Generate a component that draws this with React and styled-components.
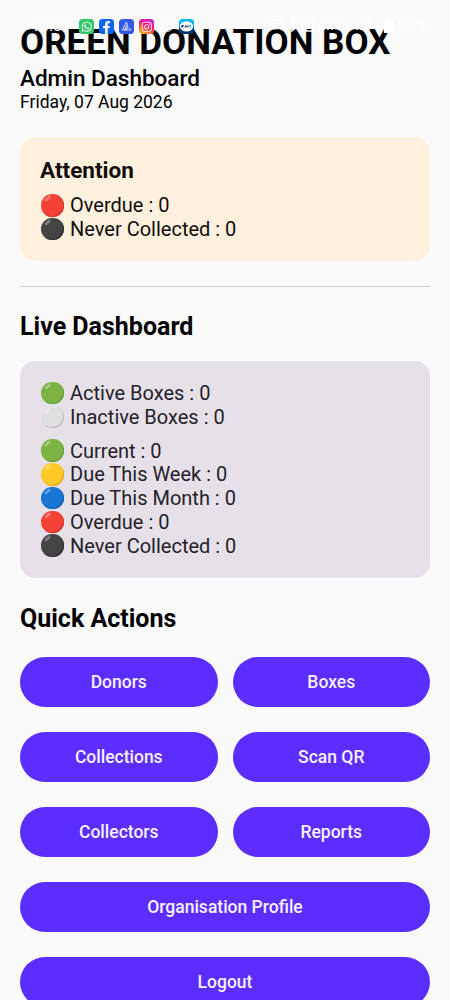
import React from "react";
import styled, { createGlobalStyle } from "styled-components";
import { FaWhatsapp, FaFacebookF, FaInstagram } from "react-icons/fa";

const GlobalStyle = createGlobalStyle`
  * { box-sizing: border-box; }
  body { margin: 0; background: #fafafa; }
`;

const Screen = styled.main`
  position: relative;
  height: 1000px;
  overflow: hidden;
  padding: 20.5px 20px 0;
  background: #fafafa;
  color: #000;
  font-family: Roboto, sans-serif;
`;

const Title = styled.h1`
  margin: 0;
  font-size: 35px;
  font-weight: 700;
  line-height: 43.25px;
  white-space: nowrap;
`;

const Subtitle = styled.h2`
  margin: 1px 0 0;
  font-size: 22.5px;
  font-weight: 500;
  line-height: 26.25px;
`;

const DateText = styled.p`
  margin: 0;
  padding-top: 1px;
  font-size: 17.5px;
  line-height: 21px;
`;

const Card = styled.section`
  display: flex;
  flex-direction: column;
  gap: 10px;
  padding: 20px;
  border-radius: 15px;
  background: ${(p) => p.$background};
  color: ${(p) => p.$color};
`;

const AttentionCard = styled(Card)`
  margin-top: 24.25px;
`;

const CardTitle = styled.h3`
  margin: 0;
  font-size: 22.5px;
  font-weight: 700;
  line-height: 26.25px;
`;

const StatusRow = styled.div`
  display: flex;
  align-items: center;
  height: 23.75px;
  font-size: 20px;
  line-height: 23.75px;
  white-space: nowrap;
`;

const StatusLabel = styled.span`
  padding-top: 1.5px;
`;

const Dot = styled.span`
  position: relative;
  width: 22.5px;
  height: 22.5px;
  margin: 0 6.5px 0 1px;
  border-radius: 50%;
  background: ${(p) => p.$fill};
  box-shadow: inset -1px -1px 1px ${(p) => p.$shade};

  &::before {
    content: "";
    position: absolute;
    top: 3px;
    left: 2.5px;
    width: 7px;
    height: 2.5px;
    border-radius: 50%;
    background: rgba(255, 255, 255, 0.32);
    filter: blur(0.4px);
    transform: rotate(-42deg);
  }
`;

const Divider = styled.hr`
  height: 1.5px;
  margin: 24.75px 0 25px;
  border: 0;
  background: linear-gradient(#cfccd4 0 1px, #e2e0e5 1px);
`;

const SectionTitle = styled.h2`
  margin: 0 0 20px;
  font-size: 25px;
  font-weight: 700;
  line-height: 29px;
`;

const QuickTitle = styled(SectionTitle)`
  margin: 26px 0 24.75px;
`;

const Actions = styled.div`
  display: grid;
  grid-template-columns: 1fr 1fr;
  gap: 25px 15px;
`;

const ActionButton = styled.button`
  grid-column: ${(p) => (p.$wide ? "1 / -1" : "auto")};
  height: 50px;
  padding: 0;
  border: 0;
  border-radius: 25px;
  background: #5b2eff;
  color: #f8f0ff;
  font: 500 17.5px/25px Roboto, sans-serif;
`;

const StatusBar = styled.div`
  position: absolute;
  top: 17px;
  left: 31px;
  right: 22px;
  display: flex;
  align-items: center;
  height: 19px;
  color: #fdfdfd;
  font-size: 16px;
  line-height: 19px;
`;

const Clock = styled.span`
  width: 48px;
  height: 21px;
`;

const Notifications = styled.div`
  display: flex;
  gap: 5px;
`;

const AppIcon = styled.span`
  display: grid;
  place-items: center;
  width: 15px;
  height: 15px;
  border-radius: 3.5px;
  overflow: hidden;
  color: #fff;
  background: ${(p) => p.$background};
`;

const FacebookMark = styled(FaFacebookF)`
  margin-top: 2px;
`;

const SystemIcons = styled.div`
  display: flex;
  align-items: center;
  gap: 5px;
  margin-left: auto;
  padding-bottom: 2px;
`;

const groups = [
  [["Active Boxes", "green"], ["Inactive Boxes", "white"]],
  [
    ["Current", "green"],
    ["Due This Week", "yellow"],
    ["Due This Month", "blue"],
    ["Overdue", "red"],
    ["Never Collected", "black"],
  ],
];

const colors = {
  red: ["#f44336", "#d73229"],
  black: ["#444", "#303030"],
  green: ["#7cb342", "#689f38"],
  white: ["#e0e0e0", "#bdbdbd"],
  yellow: ["#ffca28", "#e2a610"],
  blue: ["#1976d2", "#1560b5"],
};

function Status({ label, color }) {
  const [fill, shade] = colors[color];
  return (
    <StatusRow>
      <Dot $fill={fill} $shade={shade} />
      <StatusLabel>{`${label} : 0`}</StatusLabel>
    </StatusRow>
  );
}

function PhoneStatus() {
  return (
    <StatusBar>
      <Clock>15:57</Clock>
      <Notifications>
        <AppIcon $background="#35c96b"><FaWhatsapp size={11.5} /></AppIcon>
        <AppIcon $background="#0866f5">
          <FacebookMark size={13} />
        </AppIcon>
        <AppIcon $background="#3458e8">
          <svg width="11" height="11" viewBox="0 0 11 11" fill="none" stroke="#dfe9ff" strokeWidth="0.9">
            <path d="M5.2 1.2 1.2 9h2.2l3-6ZM6.6 3.4 3.9 9M7.2 5 5.4 9M8.2 6.5 9.7 9H3" />
          </svg>
        </AppIcon>
        <AppIcon $background="linear-gradient(25deg, #ffc62b 5%, #fb6b35 30%, #f21679 57%, #c81fd8 90%)">
          <FaInstagram size={11.5} />
        </AppIcon>
        <AppIcon as="svg" viewBox="0 0 15 15" $background="transparent">
          <path d="M1 4.2h2M0 7.5h3M1 10.8h2" stroke="#fdfdfd" strokeWidth="1.2" />
          <circle cx="8.5" cy="7.5" r="4.8" fill="none" stroke="#fdfdfd" />
        </AppIcon>
        <AppIcon as="svg" viewBox="0 0 15 15" $background="linear-gradient(#08b5ed 45%, #073572 65%)">
          <ellipse cx="7.5" cy="7.4" rx="6.7" ry="5.2" fill="#fff" />
          <path d="M2.8 6.5v2m0-2h1.4v1H2.8m3 1 1-2 1 2m.4-2 .8 1 .8-1m-.8 1v1" fill="none" stroke="#16366b" strokeWidth="1" />
          <path d="M10.2 6.7h2m-1 0v2" stroke="#11aee6" strokeWidth="1" />
        </AppIcon>
      </Notifications>
      <SystemIcons>
        <svg width="18" height="15" viewBox="0 0 18 15" fill="none" stroke="#fdfdfd" strokeWidth="2">
          <path d="M1 5q8-7 16 0M4 8q5-4 10 0M7 11q2-2 4 0" />
        </svg>
        <svg width="90" height="15" viewBox="0 0 90 15" fill="none" stroke="#fdfdfd" strokeWidth="1.5">
          <path d="m3 2 6 6-6 5V1l6 5-6 5M17 2v11h7V2h-7M31 12V7m4 5V5m4 7V2m4 10V0M52 2l8 11M68 12V8m4 4V5m4 7V2m4 10V0" />
        </svg>
        <svg width="9" height="15" viewBox="0 0 9 15" fill="#fff">
          <path d="M3 0h3v2h3v13H0V2h3Z" />
        </svg>
        <span>96%</span>
      </SystemIcons>
    </StatusBar>
  );
}

export default function App() {
  return (
    <>
      <GlobalStyle />
      <Screen>
        <Title>OREEN DONATION BOX</Title>
        <Subtitle>Admin Dashboard</Subtitle>
        <DateText>Friday, 07 Aug 2026</DateText>
        <AttentionCard $background="#fff1de" $color="#100d0b">
          <CardTitle>Attention</CardTitle>
          <div>
            <Status label="Overdue" color="red" />
            <Status label="Never Collected" color="black" />
          </div>
        </AttentionCard>
        <Divider />
        <SectionTitle>Live Dashboard</SectionTitle>
        <Card $background="#e6e0e9" $color="#252129">
          {groups.map((group, index) => (
            <div key={index}>
              {group.map(([label, color]) => (
                <Status key={label} label={label} color={color} />
              ))}
            </div>
          ))}
        </Card>
        <QuickTitle>Quick Actions</QuickTitle>
        <Actions>
          {["Donors", "Boxes", "Collections", "Scan QR", "Collectors", "Reports"].map((label) => (
            <ActionButton key={label}>{label}</ActionButton>
          ))}
          <ActionButton $wide>Organisation Profile</ActionButton>
          <ActionButton $wide>Logout</ActionButton>
        </Actions>
        <PhoneStatus />
      </Screen>
    </>
  );
}
